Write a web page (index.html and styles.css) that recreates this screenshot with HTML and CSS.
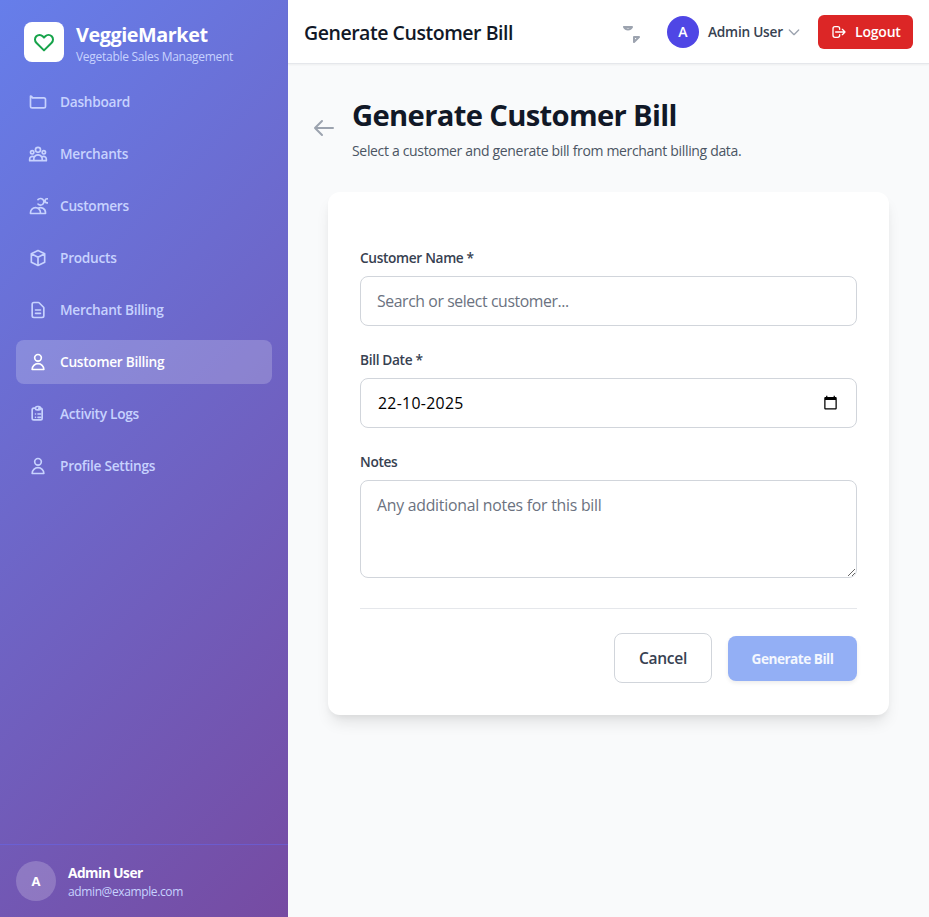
FILE: index.html
```html
<!DOCTYPE html>
<html lang="en">
<head>
<meta charset="utf-8">
<title>Generate Customer Bill</title>
<link rel="stylesheet" href="styles.css">
</head>
<body>
<div class="app">
  <aside class="sidebar">
    <div class="brand">
      <div class="logo"><svg class="icon i24" viewBox="0 0 24 24"><path d="M4.318 6.318a4.5 4.5 0 000 6.364L12 20.364l7.682-7.682a4.5 4.5 0 00-6.364-6.364L12 7.636l-1.318-1.318a4.5 4.5 0 00-6.364 0z"/></svg></div>
      <div class="brand-text">
        <div class="brand-name">VeggieMarket</div>
        <div class="brand-sub">Vegetable Sales Management</div>
      </div>
    </div>
    <nav class="nav">
      <a class="nav-item"><svg class="icon i20" viewBox="0 0 24 24"><path d="M3 7v10a2 2 0 002 2h14a2 2 0 002-2V9a2 2 0 00-2-2H5a2 2 0 00-2-2z"/></svg><span>Dashboard</span></a>
      <a class="nav-item"><svg class="icon i20" viewBox="0 0 24 24"><path d="M17 20h5v-2a3 3 0 00-5.356-1.857M17 20H7m10 0v-2c0-.656-.126-1.283-.356-1.857M7 20H2v-2a3 3 0 015.356-1.857M7 20v-2c0-.656.126-1.283.356-1.857m0 0a5.002 5.002 0 019.288 0M15 7a3 3 0 11-6 0 3 3 0 016 0zm6 3a2 2 0 11-4 0 2 2 0 014 0zM7 10a2 2 0 11-4 0 2 2 0 014 0z"/></svg><span>Merchants</span></a>
      <a class="nav-item"><svg class="icon i20" viewBox="0 0 24 24"><path d="M12 4.354a4 4 0 110 5.292M15 21H3v-1a6 6 0 0112 0v1zm0 0h6v-1a6 6 0 00-9-5.197m13.5-9a2.5 2.5 0 11-5 0 2.5 2.5 0 015 0z"/></svg><span>Customers</span></a>
      <a class="nav-item"><svg class="icon i20" viewBox="0 0 24 24"><path d="M20 7l-8-4-8 4m16 0l-8 4m8-4v10l-8 4m0-10L4 7m8 4v10M4 7v10l8 4"/></svg><span>Products</span></a>
      <a class="nav-item"><svg class="icon i20" viewBox="0 0 24 24"><path d="M9 12h6m-6 4h6m2 5H7a2 2 0 01-2-2V5a2 2 0 012-2h5.586a1 1 0 01.707.293l5.414 5.414a1 1 0 01.293.707V19a2 2 0 01-2 2z"/></svg><span>Merchant Billing</span></a>
      <a class="nav-item active"><svg class="icon i20" viewBox="0 0 24 24"><path d="M16 7a4 4 0 11-8 0 4 4 0 018 0zM12 14a7 7 0 00-7 7h14a7 7 0 00-7-7z"/></svg><span>Customer Billing</span></a>
      <a class="nav-item"><svg class="icon i20" viewBox="0 0 24 24"><path d="M9 5H7a2 2 0 00-2 2v10a2 2 0 002 2h8a2 2 0 002-2V7a2 2 0 00-2-2h-2M9 5a2 2 0 002 2h2a2 2 0 002-2M9 5a2 2 0 012-2h2a2 2 0 012 2m-3 7h3m-3 4h3m-6-4h.01M9 16h.01"/></svg><span>Activity Logs</span></a>
      <a class="nav-item"><svg class="icon i20" viewBox="0 0 24 24"><path d="M16 7a4 4 0 11-8 0 4 4 0 018 0zM12 14a7 7 0 00-7 7h14a7 7 0 00-7-7z"/></svg><span>Profile Settings</span></a>
    </nav>
    <div class="account">
      <div class="account-avatar">A</div>
      <div>
        <div class="account-name">Admin User</div>
        <div class="account-mail">admin@example.com</div>
      </div>
    </div>
  </aside>
  <div class="main">
    <header class="topbar">
      <div class="topbar-title">Generate Customer Bill</div>
      <svg class="icon i24 alert" viewBox="0 0 24 24"><path d="M15 17h5l-5 5v-5zM5 7h8a4.500 4.500 0 01-8 0z"/></svg>
      <div class="user">
        <div class="user-avatar">A</div>
        <span class="user-name">Admin User</span>
        <svg class="icon i16 chevron" viewBox="0 0 24 24"><path d="M19 9l-7 7-7-7"/></svg>
      </div>
      <button class="logout"><svg class="icon i16" viewBox="0 0 24 24"><path d="M17 16l4-4m0 0l-4-4m4 4H7m6 4v1a3 3 0 01-3 3H6a3 3 0 01-3-3V7a3 3 0 013-3h4a3 3 0 013 3v1"/></svg><span>Logout</span></button>
    </header>
    <main class="content">
      <div class="page-head">
        <svg class="icon i24 back" viewBox="0 0 24 24"><path d="M10 19l-7-7m0 0l7-7m-7 7h18"/></svg>
        <div class="page-text">
          <h1>Generate Customer Bill</h1>
          <p>Select a customer and generate bill from merchant billing data.</p>
        </div>
      </div>
      <form class="card">
        <label class="label" for="customer">Customer Name *</label>
        <input class="field customer" id="customer" type="text" placeholder="Search or select customer...">
        <label class="label" for="date">Bill Date *</label>
        <div class="field date" id="date"><span>22-10-2025</span>
          <svg class="calendar" viewBox="0 0 24 24"><path d="M20 3h-1V1h-2v2H7V1H5v2H4c-1.100 0-2 .9-2 2v16c0 1.100.9 2 2 2h16c1.100 0 2-.9 2-2V5c0-1.100-.9-2-2-2zm0 18H4V8h16v13z"/></svg>
        </div>
        <label class="label" for="notes">Notes</label>
        <textarea class="field notes" id="notes" placeholder="Any additional notes for this bill"></textarea>
        <div class="actions">
          <button type="button" class="cancel"><span>Cancel</span></button>
          <button type="button" class="submit"><span>Generate Bill</span></button>
        </div>
      </form>
    </main>
  </div>
</div>
</body>
</html>
```
FILE: styles.css
```css
* { box-sizing: border-box; }
body { margin: 0; font-family: "Segoe UI", "Open Sans", "Noto Sans", sans-serif; color: #111827; background: #f9fafb; }
h1, p { margin: 0; }
button, input, textarea { font-family: inherit; margin: 0; }
.app { display: flex; height: 917px; }
.icon { fill: none; stroke: currentColor; stroke-width: 2; stroke-linecap: round; stroke-linejoin: round; flex: none; display: block; }
.i24 { width: 24px; height: 24px; }
.i20 { width: 20px; height: 20px; }
.i16 { width: 16px; height: 16px; }

.sidebar { width: 288px; flex: none; display: flex; flex-direction: column; background: linear-gradient(135deg, #667eea 0%, #764ba2 100%); }
.brand { display: flex; align-items: center; gap: 12px; padding: 20px 24px 0; height: 64px; white-space: nowrap; }
.logo { width: 40px; height: 40px; border-radius: 8px; background: #fff; color: #16a34a; display: flex; align-items: center; justify-content: center; }
.brand-text { padding-top: 2px; }
.brand-name { font-size: 19.8px; line-height: 28px; font-weight: 700; color: #fff; letter-spacing: -0.43px; }
.brand-sub { font-size: 12px; line-height: 16px; color: #c7d2fe; letter-spacing: -0.28px; }
.nav { flex: 1; padding: 16px 16px 0; display: flex; flex-direction: column; gap: 8px; }
.nav-item { height: 44px; padding: 0 12px; display: flex; align-items: center; gap: 12px; border-radius: 8px; font-size: 13.7px; font-weight: 600; color: #c7d2fe; letter-spacing: -0.28px; }
.nav-item span { padding-bottom: 1px; }
.nav-item.active { color: #fff; background: rgba(255, 255, 255, 0.2); }
.account { height: 73px; padding: 16px; border-top: 1px solid rgba(99, 102, 241, 0.5); display: flex; align-items: center; gap: 12px; }
.account-avatar { width: 40px; height: 40px; border-radius: 50%; background: rgba(255, 255, 255, 0.2); color: #fff; font-size: 13px; font-weight: 700; display: flex; align-items: center; justify-content: center; }
.account-name { font-size: 13.7px; line-height: 20px; font-weight: 700; color: #fff; letter-spacing: -0.5px; }
.account-mail { font-size: 12px; line-height: 16px; color: #c7d2fe; letter-spacing: -0.38px; padding-top: 1px; }

.main { flex: 1; min-width: 0; display: flex; flex-direction: column; }
.topbar { height: 64px; padding: 0 16px; display: flex; align-items: center; background: #fff; border-bottom: 1px solid #e5e7eb; box-shadow: 0 1px 2px rgba(0, 0, 0, 0.05); }
.topbar-title { flex: 1; font-size: 19.5px; line-height: 28px; font-weight: 600; letter-spacing: -0.46px; padding-top: 2px; white-space: nowrap; }
.alert { color: #9ca3af; margin-right: 24px; }
.user { display: flex; align-items: center; margin-right: 16px; }
.user-avatar { width: 32px; height: 32px; border-radius: 50%; background: #4f46e5; color: #fff; font-size: 14px; font-weight: 600; display: flex; align-items: center; justify-content: center; margin-right: 9px; }
.user-name { width: 74px; font-size: 13.7px; font-weight: 600; color: #374151; letter-spacing: -0.25px; white-space: nowrap; margin-right: 4px; }
.chevron { color: #9ca3af; }
.logout { width: 95px; height: 34px; padding: 0 12px 0 13px; border: 0; border-radius: 6px; background: #dc2626; color: #fff; display: flex; align-items: center; gap: 8px; font-size: 14px; font-weight: 600; letter-spacing: -0.2px; }

.content { padding: 32px 40px 0; }
.page-head { display: flex; align-items: center; gap: 16px; margin-left: -16px; height: 64px; white-space: nowrap; }
.back { color: #9ca3af; }
.page-text { padding-top: 2px; }
h1 { font-size: 29.2px; line-height: 36px; font-weight: 700; letter-spacing: -0.66px; }
.page-head p { margin-top: 8px; font-size: 14px; line-height: 20px; color: #4b5563; letter-spacing: -0.33px; }
.card { margin-top: 32px; height: 523px; padding: 56px 32px 32px; border-radius: 12px; background: #fff; box-shadow: 0 10px 15px -3px rgba(0, 0, 0, 0.1), 0 4px 6px -2px rgba(0, 0, 0, 0.05); display: flex; flex-direction: column; }
.label { font-size: 13.7px; line-height: 20px; font-weight: 600; color: #374151; margin-bottom: 8px; letter-spacing: -0.34px; }
.field { width: 100%; height: 50px; border: 1px solid #d1d5db; border-radius: 8px; background: #fff; padding: 0 16px; margin-bottom: 24px; font-size: 15.8px; line-height: 24px; flex: none; outline: 0; letter-spacing: -0.24px; }
.customer { letter-spacing: -0.4px; }
.field::placeholder { color: #6b7280; }
.date { display: flex; align-items: center; justify-content: space-between; color: #000; padding: 0 18px 0 17px; letter-spacing: 0.32px; }
.calendar { width: 15px; height: 15px; margin-bottom: 2px; }
.notes { height: 98px; padding: 12px 16px; margin-bottom: 30px; resize: vertical; }
.actions { border-top: 1px solid #e5e7eb; padding-top: 24px; display: flex; align-items: center; justify-content: flex-end; gap: 16px; }
.cancel { width: 98px; height: 50px; border: 1px solid #d1d5db; border-radius: 8px; background: #fff; color: #374151; font-size: 15.6px; font-weight: 600; letter-spacing: -0.3px; padding: 0; }
.submit { width: 129px; height: 45px; border: 0; border-radius: 8px; background: #93aff5; color: #f4f7fe; font-size: 13.6px; font-weight: 700; letter-spacing: -0.5px; padding: 0; box-shadow: 0 2px 4px rgba(0, 0, 0, 0.08); }
```
